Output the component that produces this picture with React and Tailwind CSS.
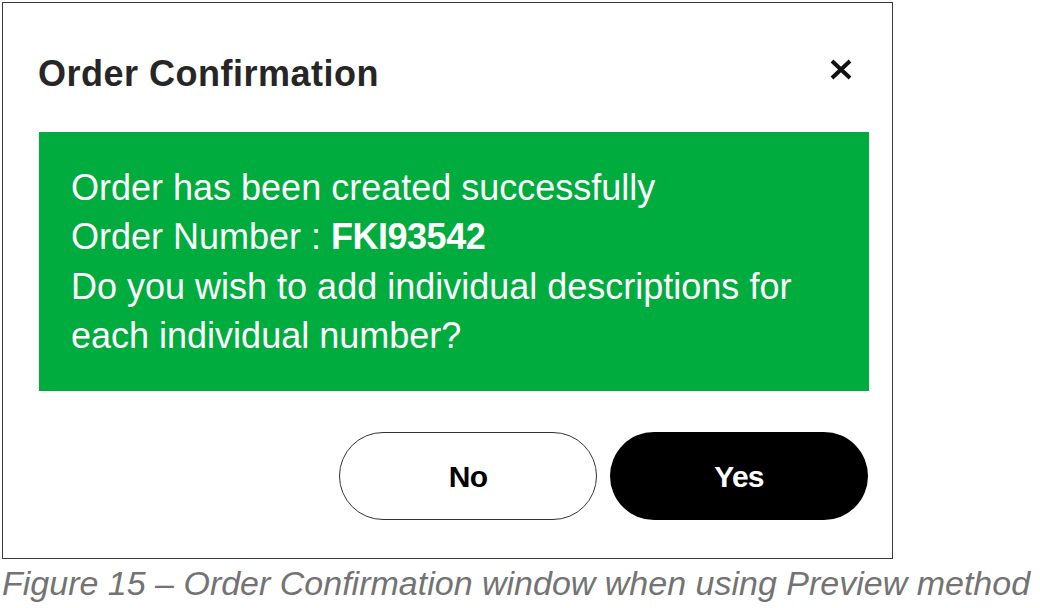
import React from "react"

function CloseIcon() {
    return (
        <svg width="24" height="21" viewBox="0 0 24 21" className="mt-[5px] mr-[39px] shrink-0">
            <path d="M3 2 L21 19 M21 2 L3 19" stroke="#111" strokeWidth="4" strokeLinecap="butt" fill="none" />
        </svg>
    )
}

function App() {
    return (
        <div className="w-[1040px] h-[608px] bg-white pl-[2px] pt-[2px] overflow-hidden"
            style={{ fontFamily: '"Liberation Sans", Arial, sans-serif' }}>
            <div className="w-[891px] h-[557px] border border-[#3a3a3a] flex flex-col">
                <div className="flex items-start justify-between pt-[51px] pl-[35px]">
                    <h1 className="text-[36px] leading-[40px] font-bold text-[#262626] tracking-[0.5px]">
                        Order Confirmation
                    </h1>
                    <CloseIcon />
                </div>

                <div className="mt-[38px] ml-[36px] mr-[23px] bg-[#00ac3e] text-white pl-[32px] pt-[31px] pb-[31px] text-[36px] leading-[49.3px]">
                    <div>Order has been created successfully</div>
                    <div>Order Number : <span className="font-bold tracking-[-0.5px]">FKI93542</span></div>
                    <div>Do you wish to add individual descriptions for</div>
                    <div>each individual number?</div>
                </div>

                <div className="mt-[41px] mr-[24px] flex justify-end gap-[13px]">
                    <button className="w-[258px] h-[88px] rounded-full border-[1.5px] border-[#333] bg-white text-black text-[30px] font-bold tracking-[-0.8px]">
                        No
                    </button>
                    <button className="w-[258px] h-[88px] rounded-full bg-black text-white text-[30px] font-bold tracking-[-0.8px]">
                        Yes
                    </button>
                </div>
            </div>

            <p className="mt-[6px] text-[34px] leading-[36px] italic text-[#737373] whitespace-nowrap">
                Figure 15 – Order Confirmation window when using Preview method
            </p>
        </div>
    )
}

export default App
